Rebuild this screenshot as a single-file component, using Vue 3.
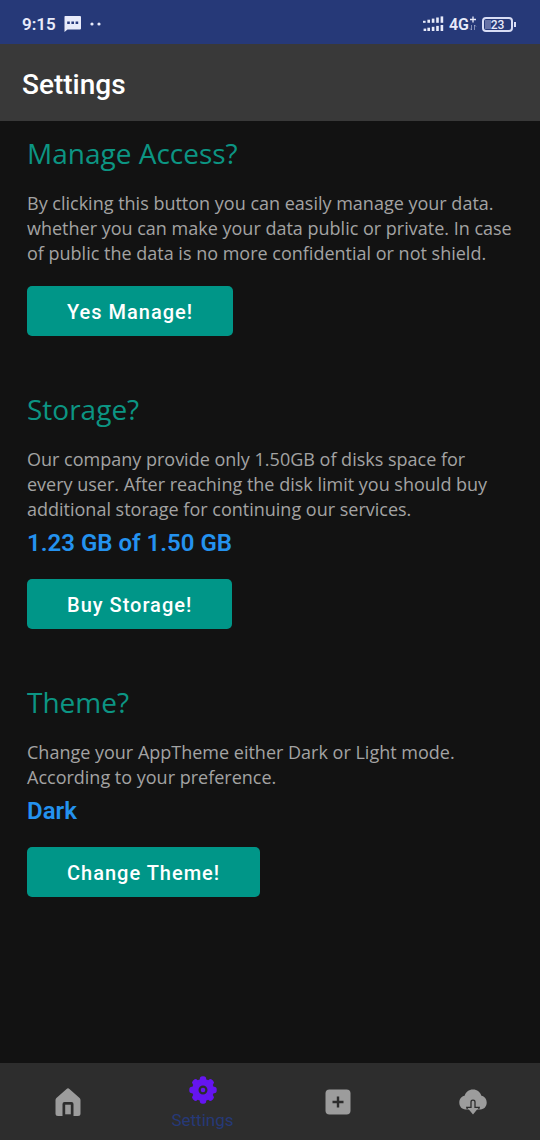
<script setup>
import { ref } from 'vue'

const active = ref('settings')

const sections = [
  {
    id: 'access',
    title: 'Manage Access?',
    text: 'By clicking this button you can easily manage your data. whether you can make your data public or private. In case of public the data is no more confidential or not shield.',
    action: 'Yes Manage!',
  },
  {
    id: 'storage',
    title: 'Storage?',
    text: 'Our company provide only 1.50GB of disks space for every user. After reaching the disk limit you should buy additional storage for continuing our services.',
    value: '1.23 GB of 1.50 GB',
    action: 'Buy Storage!',
  },
  {
    id: 'theme',
    title: 'Theme?',
    text: 'Change your AppTheme either Dark or Light mode. According to your preference.',
    value: 'Dark',
    action: 'Change Theme!',
  },
]

const teeth = [0, 45, 90, 135, 180, 225, 270, 315]
const bars = [0, 1, 2, 3, 4]
</script>

<template>
  <div class="screen">
    <div class="status">
      <div class="status-group">
        <span class="clock">9:15</span>
        <svg class="message" width="18" height="16" viewBox="0 0 18 16" aria-hidden="true">
          <path d="M1 0H16Q17 0 17 1V12.500Q17 13.500 16 13.500H3.500L0.500 16V1Q0.500 0 1 0Z" fill="#e8ebfa" />
          <path d="M3.200 5.500h2.600v2.600H3.200zM7.400 5.500h2.600v2.600H7.400zM11.600 5.500h2.600v2.600h-2.600z" fill="#283a7c" />
        </svg>
        <svg width="12" height="4" viewBox="0 0 12 4" aria-hidden="true">
          <circle cx="2" cy="2" r="1.6" fill="#e8ebfa" />
          <circle cx="9" cy="2" r="1.6" fill="#e8ebfa" />
        </svg>
      </div>
      <div class="status-group right">
        <svg width="21" height="16" viewBox="0 0 21 16" fill="#e8ebfa" aria-hidden="true">
          <rect v-for="b in bars" :key="b" :x="b * 4.4" :y="4.8 - b * 1.1" width="2.6" :height="2 + b * 1.1" />
          <rect v-for="b in bars" :key="'l' + b" :x="b * 4.4 + (b ? 0 : 0.6)" :y="12.6 - b * 0.9" width="2.6" :height="2.4 + b * 0.9" />
        </svg>
        <span class="network">
          4G
          <svg width="8" height="16" viewBox="0 0 8 16" fill="none" stroke="#e8ebfa" aria-hidden="true">
            <path d="M4 0.5V6.500M1 3.500H7" stroke-width="1.3" />
            <path d="M2.500 9V14M1 12.500L2.500 14M5.500 14V9M7 10.500L5.500 9" stroke-width="0.8" opacity="0.6" />
          </svg>
        </span>
        <span class="battery"><span class="charge"></span><span class="percent">23</span></span>
      </div>
    </div>

    <header class="bar">
      <h1>Settings</h1>
    </header>

    <main>
      <section v-for="s in sections" :key="s.id">
        <h2>{{ s.title }}</h2>
        <p class="text">{{ s.text }}</p>
        <p v-if="s.value" class="value">{{ s.value }}</p>
        <button class="action" type="button">{{ s.action }}</button>
      </section>
    </main>

    <nav>
      <button type="button" aria-label="Home" @click="active = 'home'">
        <svg width="26" height="28" viewBox="0 0 26 28" aria-hidden="true">
          <path d="M13 0.3Q13.7 0.3 14.4 1L24.6 10Q25.5 11 25.5 12.3V25.5Q25.5 28 23 28H18.5V16Q18.5 14 16.5 14H9.5Q7.500 14 7.500 16V28H3Q0.500 28 0.500 25.500V12.300Q0.500 11 1.400 10L11.600 1Q12.300 0.300 13 0.300Z" fill="#9c9c9c" />
          <rect x="10.200" y="16.700" width="5.600" height="9.600" fill="#9c9c9c" />
        </svg>
      </button>
      <button type="button" class="current" aria-current="page" @click="active = 'settings'">
        <svg width="28" height="28" viewBox="0 0 28 28" aria-hidden="true">
          <circle cx="14" cy="14" r="11" fill="#6515f0" />
          <rect v-for="a in teeth" :key="a" x="10.800" y="0.300" width="6.400" height="8" rx="2.600" fill="#6515f0" :transform="`rotate(${a} 14 14)`" />
          <circle cx="14" cy="14" r="3.400" fill="none" stroke="#2d2d2d" stroke-width="2.200" />
        </svg>
        <span>Settings</span>
      </button>
      <button type="button" aria-label="Add" @click="active = 'add'">
        <svg width="26" height="26" viewBox="0 0 26 26" aria-hidden="true">
          <rect x="0.500" y="0.500" width="25" height="25" rx="4" fill="#9c9c9c" />
          <path d="M13 7.500V18.500M7.500 13H18.500" stroke="#2d2d2d" stroke-width="2.400" />
        </svg>
      </button>
      <button type="button" aria-label="Downloads" @click="active = 'downloads'">
        <svg width="28" height="26" viewBox="0 0 28 26" aria-hidden="true">
          <path d="M6.500 20.500C2.800 20.500 0.300 17.400 0.300 13.600C0.300 10 2.500 7.400 5.600 6.800C6.700 3 9.800 0.500 14 0.500C18.200 0.500 21.300 3 22.400 6.800C25.500 7.400 27.700 10 27.700 13.600C27.700 17.400 25.200 20.500 21.500 20.500Z" fill="#9c9c9c" />
          <path d="M12 18V13Q12 11.200 14 11.200Q16 11.200 16 13V18H20.200L14 25.500L7.800 18Z" fill="#9c9c9c" />
          <path d="M8.300 20.200L7.800 18.300H12V13Q12 11.200 14 11.200Q16 11.200 16 13V18.300H20.200L19.700 20.200" fill="none" stroke="#2d2d2d" stroke-width="1.300" />
        </svg>
      </button>
    </nav>
  </div>
</template>

<style>
body {
  background: #121212;
}
</style>

<style scoped>
.screen {
  min-height: 100vh;
  display: flex;
  flex-direction: column;
  background: #121212;
  font-family: Roboto, "Liberation Sans", sans-serif;
}

.status {
  box-sizing: border-box;
  height: 44px;
  padding: 4px 24px 0 22px;
  display: flex;
  align-items: center;
  justify-content: space-between;
  background: #263978;
  color: #e8ebfa;
}

.status-group {
  display: flex;
  align-items: center;
  gap: 8px;
}

.status-group.right {
  gap: 5px;
}

.clock {
  font-size: 17px;
  font-weight: 600;
}

.network {
  display: flex;
  align-items: center;
  font-size: 16px;
  font-weight: 600;
}

.battery {
  position: relative;
  box-sizing: border-box;
  width: 31px;
  height: 15px;
  margin-right: 3px;
  border: 2px solid #d8ddf5;
  border-radius: 4px;
  display: grid;
  align-items: center;
  justify-items: center;
}

.battery::after {
  content: "";
  position: absolute;
  top: 3px;
  right: -5px;
  width: 2px;
  height: 5px;
  background: #d8ddf5;
}

.charge,
.percent {
  grid-area: 1 / 1;
}

.charge {
  justify-self: start;
  width: 6px;
  height: 9px;
  margin-left: 1px;
  background: #6672a5;
}

.percent {
  font-size: 12px;
  line-height: 12px;
  font-weight: 500;
}

.bar {
  padding: 24px 22px 20px;
  background: #393939;
}

h1 {
  margin: 0;
  font-size: 28px;
  line-height: 33px;
  font-weight: 500;
  color: #fff;
}

main {
  flex: 1;
  padding: 12px 27px 0;
}

section {
  margin-bottom: 53px;
}

h2 {
  margin: 0 0 18px;
  font-family: "Open Sans", "Noto Sans", sans-serif;
  font-size: 28px;
  line-height: 40px;
  font-weight: 400;
  color: #0c9583;
}

p {
  margin: 0;
}

.text {
  font-family: "Open Sans", "Noto Sans", sans-serif;
  font-size: 18px;
  line-height: 25px;
  color: #a3a3a3;
}

.value {
  margin-top: 6px;
  font-size: 24px;
  line-height: 31px;
  font-weight: 600;
  color: #2492ef;
}

.action {
  display: block;
  height: 50px;
  margin-top: 20px;
  padding: 1px 40px 0;
  border: 0;
  border-radius: 5px;
  background: #009688;
  color: #fff;
  font: 500 20px Roboto, "Liberation Sans", sans-serif;
  letter-spacing: 1px;
}

nav {
  height: 77px;
  display: grid;
  grid-template-columns: repeat(4, 1fr);
  background: #2d2d2d;
}

nav button {
  padding: 0;
  border: 0;
  background: none;
  display: flex;
  flex-direction: column;
  align-items: center;
  justify-content: center;
}

nav .current {
  padding-top: 2px;
  gap: 6px;
  font: 400 17px/20px Roboto, "Liberation Sans", sans-serif;
  color: #263978;
}
</style>
